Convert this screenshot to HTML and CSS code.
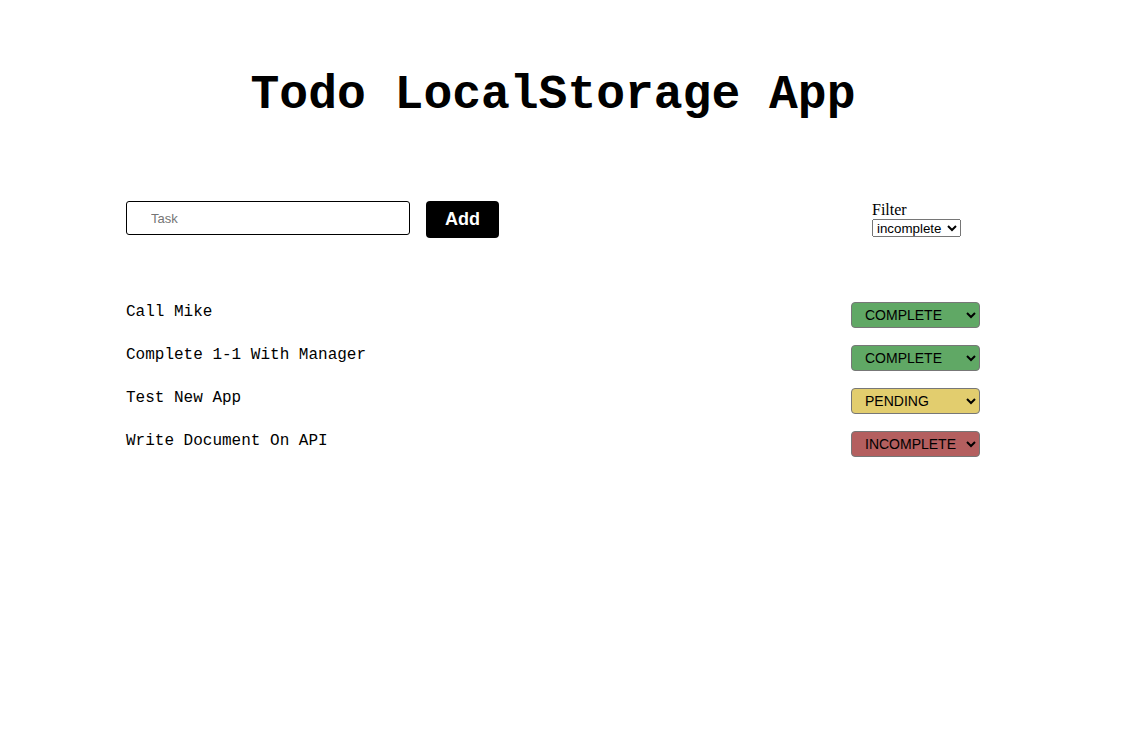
FILE: index.html
```html
<!DOCTYPE html>
<html lang="en">
<head>
<meta charset="utf-8">
<title>Todo LocalStorage App</title>
<link rel="stylesheet" href="styles.css">
</head>
<body>
<main class="app">
  <h1 class="title">Todo LocalStorage App</h1>
  <div class="toolbar">
    <form class="add-form">
      <input class="task-input" type="text" placeholder="Task">
      <button class="add-btn" type="button">Add</button>
    </form>
    <div class="filter">
      <label class="filter-label" for="filter">Filter</label>
      <select id="filter" class="filter-select">
        <option>all</option>
        <option>complete</option>
        <option>pending</option>
        <option selected>incomplete</option>
      </select>
    </div>
  </div>
  <ul class="todo-list">
    <li class="todo">
      <span class="todo-text">Call Mike</span>
      <select class="status status-complete">
        <option selected>COMPLETE</option><option>PENDING</option><option>INCOMPLETE</option>
      </select>
    </li>
    <li class="todo">
      <span class="todo-text">Complete 1-1 With Manager</span>
      <select class="status status-complete">
        <option selected>COMPLETE</option><option>PENDING</option><option>INCOMPLETE</option>
      </select>
    </li>
    <li class="todo">
      <span class="todo-text">Test New App</span>
      <select class="status status-pending">
        <option>COMPLETE</option><option selected>PENDING</option><option>INCOMPLETE</option>
      </select>
    </li>
    <li class="todo">
      <span class="todo-text">Write Document On API</span>
      <select class="status status-incomplete">
        <option>COMPLETE</option><option>PENDING</option><option selected>INCOMPLETE</option>
      </select>
    </li>
  </ul>
</main>
</body>
</html>
```

FILE: styles.css
```css
* { box-sizing: border-box; }
body {
  margin: 0;
  background: #fff;
  color: #000;
  font-family: "Liberation Serif", serif;
}
.app {
  width: 854px;
  margin-left: 126px;
  padding-top: 68px;
}
.title {
  margin: 0;
  text-align: center;
  font-family: "Liberation Mono", monospace;
  font-weight: bold;
  font-size: 48px;
  line-height: 54px;
}
.toolbar {
  display: flex;
  justify-content: space-between;
  align-items: flex-start;
  margin-top: 79px;
}
.add-form {
  display: flex;
  align-items: flex-start;
  gap: 16px;
}
.task-input {
  width: 284px;
  height: 34px;
  border: 1px solid #000;
  border-radius: 3px;
  padding: 0 24px;
  font-family: "Liberation Sans", Arial, sans-serif;
  font-size: 13px;
  outline: none;
}
.task-input::placeholder { color: #757575; }
.add-btn {
  width: 73px;
  height: 37px;
  border: none;
  border-radius: 4px;
  background: #000;
  color: #fff;
  font-family: "Liberation Sans", Arial, sans-serif;
  font-weight: bold;
  font-size: 18px;
  padding: 0;
}
.filter {
  display: flex;
  flex-direction: column;
  align-items: flex-start;
  margin-right: 19px;
  width: 89px;
}
.filter-label {
  font-size: 16px;
  line-height: 18px;
}
.filter-select {
  width: 89px;
  height: 18px;
  margin-top: 0;
  font-family: "Liberation Sans", Arial, sans-serif;
  font-size: 13.33px;
}
.todo-list {
  list-style: none;
  margin: 64px 0 0;
  padding: 0;
}
.todo {
  display: flex;
  justify-content: space-between;
  align-items: flex-start;
  margin-bottom: 17px;
}
.todo-text {
  font-family: "Liberation Mono", monospace;
  font-size: 16px;
  line-height: 18px;
  padding-top: 1px;
}
.status {
  width: 129px;
  height: 26px;
  border: 1px solid #777;
  border-radius: 4px;
  padding: 0 0 0 9px;
  font-family: "Liberation Sans", Arial, sans-serif;
  font-size: 14px;
  color: #000;
}
.status-complete { background-color: #60a865; }
.status-pending { background-color: #e2cd6e; }
.status-incomplete { background-color: #b45f5f; }
```
